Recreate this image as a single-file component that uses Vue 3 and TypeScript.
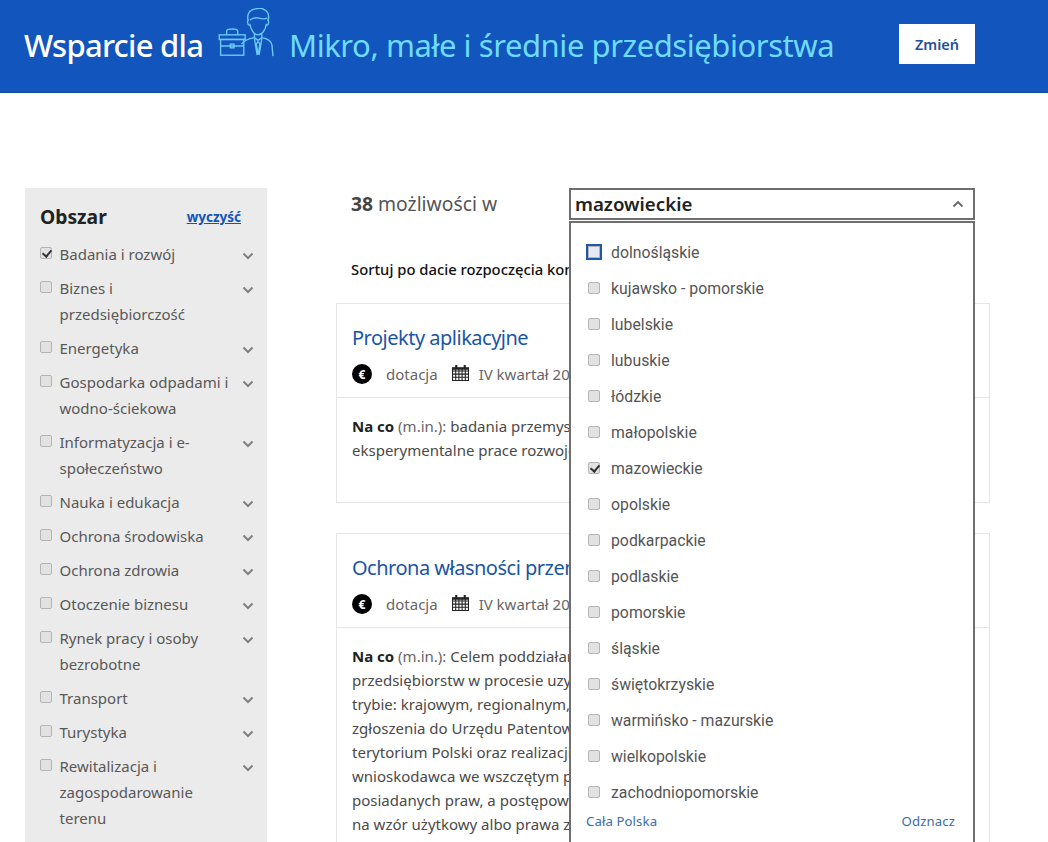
<script setup lang="ts">
const areas: { label: string[]; checked?: boolean }[] = [
  { label: ['Badania i rozwój'], checked: true },
  { label: ['Biznes i', 'przedsiębiorczość'] },
  { label: ['Energetyka'] },
  { label: ['Gospodarka odpadami i', 'wodno-ściekowa'] },
  { label: ['Informatyzacja i e-', 'społeczeństwo'] },
  { label: ['Nauka i edukacja'] },
  { label: ['Ochrona środowiska'] },
  { label: ['Ochrona zdrowia'] },
  { label: ['Otoczenie biznesu'] },
  { label: ['Rynek pracy i osoby', 'bezrobotne'] },
  { label: ['Transport'] },
  { label: ['Turystyka'] },
  { label: ['Rewitalizacja i', 'zagospodarowanie', 'terenu'] },
]
const regions = [
  'dolnośląskie', 'kujawsko - pomorskie', 'lubelskie', 'lubuskie', 'łódzkie', 'małopolskie',
  'mazowieckie', 'opolskie', 'podkarpackie', 'podlaskie', 'pomorskie', 'śląskie',
  'świętokrzyskie', 'warmińsko - mazurskie', 'wielkopolskie', 'zachodniopomorskie',
]
const card2 = [
  'przedsiębiorstw w procesie uzyskiwania',
  'trybie: krajowym, regionalnym, między',
  'zgłoszenia do Urzędu Patentowego na',
  'terytorium Polski oraz realizacji działań',
  'wnioskodawca we wszczętym postępowaniu',
  'posiadanych praw, a postępowanie jest',
  'na wzór użytkowy albo prawa z rejestracji',
]
</script>

<template>
  <div class="page">
    <header class="hero">
      <span class="hero-lead">Wsparcie dla</span>
      <svg class="hero-icon" viewBox="0 0 60 54" fill="none" stroke="#6cc8f5" stroke-width="1.500">
        <path d="M31 13c-1-6 1-11 8-12 3-1 7-1 10 1 4 2 5 6 4 11" />
        <path d="M33 13c3-2 7-3 10-2 3 1 6 1 9 0M32 13c-2 0-2 5 1 6M52 13c2 0 2 5-1 6" />
        <path d="M33 17c1 7 5 12 9 12s8-5 9-12" />
        <path d="M38 28v4l4 3 4-3v-4M38 32c-6 1-11 3-14 7M46 32c6 1 10 3 11 8l1 12" />
        <path d="M38 33l3 18M46 33l-3 18M42 36l-2 3 2 11 2-11-2-3" />
        <rect x="0" y="29" width="28" height="5" />
        <rect x="1.500" y="34" width="25" height="17" />
        <path d="M8 29v-4c0-3 12-3 12 0v4M1.500 41h25" />
        <rect x="12" y="39" width="4" height="4" />
      </svg>
      <span class="hero-value">Mikro, małe i średnie przedsiębiorstwa</span>
      <button class="hero-btn" type="button">Zmień</button>
    </header>

    <main class="layout">
      <aside class="sidebar">
        <div class="side-head">
          <h2>Obszar</h2>
          <a href="#" class="clear">wyczyść</a>
        </div>
        <ul class="areas">
          <li v-for="a in areas" :key="a.label[0]" class="area">
            <input type="checkbox" class="cb" :checked="a.checked" />
            <span class="area-label"><span v-for="l in a.label" :key="l" class="line">{{ l }}</span></span>
            <svg class="chev" viewBox="0 0 12 8" fill="none" stroke="#808080" stroke-width="2"><path d="M1.500 1.500 6 6l4.500-4.500" /></svg>
          </li>
        </ul>
      </aside>

      <section class="content">
        <div class="count-row">
          <div class="count"><b>38</b> możliwości w</div>
          <div class="select-wrap">
            <div class="select">
              <span>mazowieckie</span>
              <svg viewBox="0 0 12 8" fill="none" stroke="#666" stroke-width="1.800"><path d="M1.500 6.500 6 2l4.500 4.500" /></svg>
            </div>
            <div class="dropdown">
              <ul class="regions">
                <li v-for="(r, i) in regions" :key="r" class="region" :class="{ focus: i === 0 }">
                  <input type="checkbox" class="cb" :checked="r === 'mazowieckie'" />
                  <span>{{ r }}</span>
                </li>
              </ul>
              <div class="drop-foot">
                <a href="#">Cała Polska</a>
                <a href="#">Odznacz</a>
              </div>
            </div>
          </div>
        </div>
        <div class="sort">Sortuj po dacie rozpoczęcia konkursu</div>

        <article class="card c1">
          <div class="card-top">
            <h3>Projekty aplikacyjne</h3>
            <div class="meta">
              <span class="euro">€</span>
              <span class="kind">dotacja</span>
              <svg class="cal" viewBox="0 0 16 16" fill="none" stroke="#222" stroke-width="1"><path d="M.5 3.500h15v12H.5zM.5 6.500h15M.5 9.500h15M.5 12.500h15M3.500 3.500v12M6.500 3.500v12M9.500 3.500v12M12.500 3.500v12" /><path d="M4 1v3M12 1v3M0 4.500h16" stroke-width="2" /></svg>
              <span class="date">IV kwartał 2018</span>
            </div>
          </div>
          <div class="card-body">
            <p><b>Na co</b> <span class="muted">(m.in.):</span> badania przemysłowe oraz</p>
            <p>eksperymentalne prace rozwojowe</p>
          </div>
        </article>

        <article class="card c2">
          <div class="card-top">
            <h3>Ochrona własności przemysłowej</h3>
            <div class="meta">
              <span class="euro">€</span>
              <span class="kind">dotacja</span>
              <svg class="cal" viewBox="0 0 16 16" fill="none" stroke="#222" stroke-width="1"><path d="M.5 3.500h15v12H.5zM.5 6.500h15M.5 9.500h15M.5 12.500h15M3.500 3.500v12M6.500 3.500v12M9.500 3.500v12M12.500 3.500v12" /><path d="M4 1v3M12 1v3M0 4.500h16" stroke-width="2" /></svg>
              <span class="date">IV kwartał 2018</span>
            </div>
          </div>
          <div class="card-body">
            <p><b>Na co</b> <span class="muted">(m.in.):</span> Celem poddziałania jest</p>
            <p v-for="l in card2" :key="l">{{ l }}</p>
          </div>
        </article>
      </section>
    </main>
  </div>
</template>

<style>
html, body { margin: 0; padding: 0; background: #fff; overflow: hidden; }
</style>

<style scoped>
.page {
  width: 1048px;
  height: 842px;
  overflow: hidden;
  font-family: "Noto Sans", "Open Sans", sans-serif;
  color: #444;
}
.hero {
  background: #1255bd;
  border-bottom: 1px solid #0f4c9c;
  display: flex;
  align-items: center;
  padding: 0 0 2px 24px;
  box-sizing: border-box;
  height: 93px;
}
.hero-lead { color: #fff; font-size: 31px; font-weight: 500; letter-spacing: -0.75px; width: 180px; white-space: nowrap; flex: none; }
.hero-icon { width: 58px; height: 50px; margin: -24px 0 0 14px; flex: none; }
.hero-value { color: #6fdcff; font-size: 31px; letter-spacing: -0.44px; margin-left: 13px; width: 610px; white-space: nowrap; flex: none; }
.hero-btn {
  width: 76px; height: 40px; background: #fff; border: 0; flex: none;
  color: #1f4f9a; font: 600 14.500px "Noto Sans", sans-serif; margin: 0 0 2px; padding: 0;
}
.layout { display: flex; align-items: flex-start; padding: 95px 0 0 25px; gap: 69px; }
.sidebar { width: 242px; flex: none; background: #ebebeb; padding: 15px 13px 20px 15px; box-sizing: border-box; height: 700px; }
.side-head { display: flex; justify-content: space-between; align-items: center; padding-right: 13px; height: 26px; margin-bottom: 12px; }
.side-head h2 { margin: 0; font-size: 19.300px; font-weight: 700; color: #222; }
.clear { color: #1255bd; font-size: 13.500px; font-weight: 700; padding-top: 2px; }
.areas, .regions { list-style: none; margin: 0; padding: 0; }
.area { display: flex; align-items: flex-start; padding: 0 0 8px; line-height: 26px; font-size: 15px; color: #585858; }
.cb {
  appearance: none; width: 12px; height: 12px; margin: 0; flex: none; border: 1px solid #b4b4b4; border-radius: 2px;
  background: #e2e2e2; box-sizing: border-box; position: relative;
}
.cb:checked::after {
  content: ""; position: absolute; left: 2.500px; top: 0; width: 4px; height: 7px;
  border: solid #333; border-width: 0 2px 2px 0; transform: rotate(40deg);
}
.area .cb { margin: 6px 7.500px 0 0; }
.area-label { flex: 1; }
.line { display: block; }
.chev { width: 12px; height: 8px; margin-top: 11px; flex: none; }
.content { width: 654px; flex: none; }
.count-row { display: flex; padding-left: 15px; height: 32px; }
.count { width: 218px; font-size: 19.300px; line-height: 31px; color: #555; flex: none; }
.count b { color: #444; }
.select-wrap { position: relative; width: 406px; flex: none; }
.select {
  height: 32px; box-sizing: border-box; border: 2px solid #6e6e6e; background: #fff; display: flex; align-items: center;
  justify-content: space-between; padding: 0 9px 2px 4px; font-size: 18.700px; font-weight: 600; color: #222;
}
.select svg { width: 12px; height: 8px; margin-top: 2px; }
.dropdown {
  position: absolute; left: 0; top: 33px; width: 406px; height: 640px; box-sizing: border-box;
  border: 2px solid #6e6e6e; background: #fff; z-index: 2; font-family: Roboto, sans-serif;
}
.regions { padding-top: 11px; }
.region { height: 36px; display: flex; align-items: center; padding-left: 17px; font-size: 15.800px; color: #555; }
.region .cb { margin-right: 11px; }
.region.focus .cb { outline: 2px solid #1e56a8; border-radius: 0; background: #e6e9f2; }
.drop-foot { display: flex; justify-content: space-between; padding: 2px 18px 0 15px; font-size: 13.200px; letter-spacing: 0.1px; font-family: "Noto Sans", sans-serif; }
.drop-foot a { color: #3a6ea8; text-decoration: none; }
.sort { margin: 37px 0 0 15px; font-size: 14.800px; font-weight: 500; color: #111; line-height: 24px; white-space: nowrap; }
.card { border: 1px solid #e6e6e6; width: 654px; box-sizing: border-box; }
.c1 { margin-top: 22px; height: 200px; }
.c2 { margin-top: 30px; height: 400px; }
.card-top { padding: 19px 15px 0; height: 94px; box-sizing: border-box; border-bottom: 1px solid #e6e6e6; }
.card h3 { margin: 0; font-size: 20px; font-weight: 400; color: #1a55a5; line-height: 30px; letter-spacing: -0.5px; }
.meta { display: flex; align-items: center; margin-top: 11px; font-size: 15px; color: #666; white-space: nowrap; }
.euro { width: 20px; height: 20px; border-radius: 50%; background: #000; color: #fff; font-size: 12px; font-weight: 700; display: flex; align-items: center; justify-content: center; flex: none; }
.kind { margin-left: 14px; }
.cal { width: 17px; height: 17px; margin: -3px 0 0 14px; flex: none; }
.date { margin-left: 10px; }
.card-body { padding: 16px 15px 0; font-size: 15px; line-height: 24px; color: #4a4a4a; white-space: nowrap; }
.card-body p { margin: 0; }
.card-body b { color: #222; }
.muted { color: #666; }
</style>
